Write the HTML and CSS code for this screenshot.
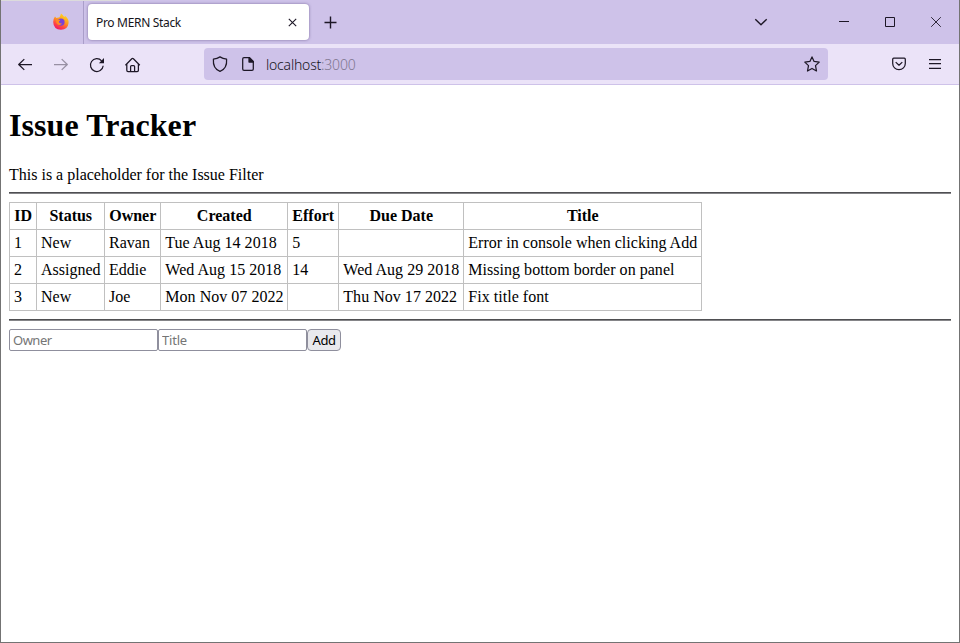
FILE: index.html
```html
<!DOCTYPE html>
<html lang="en">
<head>
<meta charset="utf-8">
<title>Pro MERN Stack</title>
<link rel="stylesheet" href="styles.css">
</head>
<body>
<div class="window">
  <header class="tabstrip">
    <div class="pinned">
      <svg width="18" height="18" viewBox="0 0 18 18">
        <defs>
          <linearGradient id="flame" x1="0.8" y1="0" x2="0.3" y2="1">
            <stop offset="0" stop-color="#ffe226"/>
            <stop offset="0.45" stop-color="#ff9a1f"/>
            <stop offset="0.75" stop-color="#ff4545"/>
            <stop offset="1" stop-color="#ee1469"/>
          </linearGradient>
        </defs>
        <path fill="url(#flame)" d="M3 3.4 L4.3 5 Q6 4.3 7.3 4.6 Q8.3 3.4 9 .6 Q11 1.8 12.1 4 L13.2 3 Q17 6 16.6 10 Q15.8 16.7 9 16.8 Q1.4 16.4 1.2 9 Q1.3 5.5 3 3.4Z"/>
        <circle cx="9" cy="9.1" r="3.6" fill="#7a42d8"/>
        <path fill="#ff8a25" d="M4 7 Q6.5 5.8 8.4 7.4 Q7 7.8 6.8 9 Q7.6 10.9 10 10.3 Q9 12.7 6 11.8 Q3.8 10.5 4 7Z"/>
      </svg>
    </div>
    <div class="tab">
      <span class="tab-title">Pro MERN Stack</span>
      <svg class="tab-close" width="9" height="9" viewBox="0 0 9 9"><path d="M.8 .8 8.2 8.2M8.2 .8 .8 8.2"/></svg>
    </div>
    <svg class="new-tab" width="13" height="13" viewBox="0 0 13 13"><path d="M6.5 .5V12.5M.5 6.5H12.5"/></svg>
    <div class="caption">
      <svg width="14" height="14" viewBox="0 0 14 14"><path stroke-width="1.4" d="M1.3 4.2 7 9.7 12.7 4.2"/></svg>
      <svg width="10" height="10" viewBox="0 0 10 10"><path stroke-width="1" d="M0 4.5H10"/></svg>
      <svg width="10" height="10" viewBox="0 0 10 10"><path stroke-width="1" d="M.5 .5H9.5V9.5H.5Z"/></svg>
      <svg width="10" height="10" viewBox="0 0 10 10"><path stroke-width=".9" d="M.2 .2 9.8 9.8M9.8 .2 .2 9.8"/></svg>
    </div>
  </header>
  <nav class="toolbar">
    <div class="nav-buttons">
      <svg width="16" height="16" viewBox="0 0 16 16"><path d="M15 7.5H2M7.3 2.1 1.7 7.5 7.3 12.9"/></svg>
      <svg class="disabled" width="16" height="16" viewBox="0 0 16 16"><path d="M1 7.5H14M8.7 2.1 14.3 7.5 8.7 12.9"/></svg>
      <svg width="16" height="16" viewBox="0 0 16 16"><path d="M14.2 8.8A6.4 6.4 0 1 1 12.6 3.8"/><path class="solid" d="M15 1.1V6.2H9.9Z"/></svg>
      <svg width="16" height="16" viewBox="0 0 16 16"><path d="M.4 8.2 6.8 1.8Q7.6 1.1 8.4 1.8L14.8 8.2M1.8 7V13.2Q1.8 14.5 3.1 14.5H12.1Q13.4 14.5 13.4 13.2V7M5.6 14.5V9.6Q5.6 8.6 6.6 8.6H8.6Q9.6 8.6 9.6 9.6V14.5"/></svg>
    </div>
    <div class="address">
      <svg width="16" height="16" viewBox="0 0 16 16"><path d="M8 .9Q10.8 2.7 14.6 3.2C15 8.4 12.9 13.5 8 15.3C3.1 13.5 1 8.4 1.4 3.2Q5.2 2.7 8 .9Z"/></svg>
      <svg class="page-icon" width="12" height="14" viewBox="0 0 12 14"><path d="M7.6 .7H2Q.7 .7 .7 2V12Q.7 13.3 2 13.3H10Q11.3 13.3 11.3 12V4.4Z"/><path class="fold" d="M7 .7V5H11.3Z"/></svg>
      <span class="url">localhost<span class="port">:3000</span></span>
      <svg class="star" width="16" height="16" viewBox="0 0 16 16"><path d="M8 .9 10.1 5.4 15.2 6.1 11.5 9.6 12.5 15 8 12.5 3.5 15 4.5 9.6 .8 6.1 5.9 5.4Z"/></svg>
    </div>
    <div class="tools">
      <svg width="14" height="14" viewBox="0 0 14 14"><path d="M1.7 1.2H12.3Q13.3 1.2 13.3 2.2V6.4A6.3 6.3 0 0 1 .7 6.4V2.2Q.7 1.2 1.7 1.2ZM3.7 5.1 7 8.2 10.3 5.1"/></svg>
      <svg width="12" height="12" viewBox="0 0 12 12"><path d="M0 1.5H12M0 5.7H12M0 10.3H12"/></svg>
    </div>
  </nav>
  <main class="page">
    <h1>Issue Tracker</h1>
    <div class="filter">This is a placeholder for the Issue Filter</div>
    <hr>
    <table class="issues">
      <colgroup><col class="c-id"><col class="c-status"><col class="c-owner"><col class="c-created"><col class="c-effort"><col class="c-due"><col class="c-title"></colgroup>
      <thead>
        <tr><th>ID</th><th>Status</th><th>Owner</th><th>Created</th><th>Effort</th><th>Due Date</th><th>Title</th></tr>
      </thead>
      <tbody>
        <tr><td>1</td><td>New</td><td>Ravan</td><td>Tue Aug 14 2018</td><td>5</td><td></td><td>Error in console when clicking Add</td></tr>
        <tr><td>2</td><td>Assigned</td><td>Eddie</td><td>Wed Aug 15 2018</td><td>14</td><td>Wed Aug 29 2018</td><td>Missing bottom border on panel</td></tr>
        <tr><td>3</td><td>New</td><td>Joe</td><td>Mon Nov 07 2022</td><td></td><td>Thu Nov 17 2022</td><td>Fix title font</td></tr>
      </tbody>
    </table>
    <hr>
    <form class="add-form">
      <input type="text" placeholder="Owner"><input type="text" placeholder="Title"><button type="button">Add</button>
    </form>
  </main>
</div>
</body>
</html>
```
FILE: styles.css
```css
* { box-sizing: border-box; }
body { margin: 0; background: #fff; }
svg { display: block; flex: none; fill: none; stroke: #1d1726; stroke-width: 1.25; stroke-linejoin: round; stroke-linecap: butt; }
svg .solid { fill: #1d1726; stroke: none; }
svg .fold { fill: #1d1726; }
.pinned svg { stroke: none; }
.window {
  height: 643px;
  border: 1px solid #737373;
  border-top: 0;
  background: #fff;
  overflow: hidden;
}
.tabstrip {
  display: flex;
  height: 44px;
  background: linear-gradient(#dcdbdc, #dcdbdc) 0 0 / 120px 1px no-repeat #cec2e9;
  font-family: "Noto Sans", sans-serif;
}
.pinned {
  width: 83px;
  margin-top: 1px;
  padding: 12px 0 0 51px;
  border-right: 1px solid #aa9ec9;
}
.tab {
  display: flex;
  align-items: center;
  justify-content: space-between;
  width: 221px;
  height: 36px;
  margin: 4px 0 0 4px;
  padding: 0 12px 0 8px;
  border-radius: 4px;
  background: #fff;
  box-shadow: 0 0 3px rgba(70, 50, 110, .6);
}
.tab-title { padding-top: 2px; font-size: 12px; line-height: 16px; letter-spacing: -.32px; color: #15141a; }
.tab-close { stroke-width: 1.1; }
.new-tab { margin: 16px 0 0 15px; stroke-width: 1.4; }
.caption { display: flex; align-items: center; height: 44px; margin-left: auto; padding-right: 18px; gap: 36px; }
.caption svg:first-child { margin-right: 35px; }
.toolbar {
  display: flex;
  height: 41px;
  padding: 4px 18px 0 16px;
  border-bottom: 1px solid #cec2e9;
  background: #ebe3f8;
}
.nav-buttons { display: flex; gap: 20px; width: 187px; padding-top: 9px; }
.disabled { opacity: .4; }
.address {
  display: flex;
  align-items: center;
  width: 624px;
  height: 32px;
  padding: 0 8px;
  border-radius: 4px;
  background: #cec2e9;
}
.page-icon { margin-left: 14px; }
.url { margin: 2px 0 0 12px; font: 14px/20px "Noto Sans", sans-serif; font-weight: 300; letter-spacing: -.2px; color: #15141a; }
.port { color: #7f768f; }
.star { margin-left: auto; }
.tools { display: flex; align-items: center; gap: 23px; height: 32px; margin-left: auto; }
.page { padding: 0 8px; color: #000; font: 16px/18px "Liberation Serif", serif; }
h1 { margin: 22px 0 22px; font-size: 32px; line-height: 37px; letter-spacing: .06px; }
.filter { height: 18px; }
hr { height: 2px; margin: 8px 0; border: 0; border-top: 1px solid #4f4f52; background: #858588; }
.issues { width: 693px; table-layout: fixed; border-collapse: collapse; }
.c-id { width: 27px; }
.c-status { width: 68px; }
.c-owner { width: 56px; }
.c-created { width: 127px; }
.c-effort { width: 51px; }
.c-due { width: 125px; }
.c-title { width: 238px; }
th, td { height: 27px; padding: 4px; border: 1px solid #c0c0c0; white-space: nowrap; }
th { padding-left: 4px; padding-right: 3.5px; }
td:nth-child(n+4) { padding-left: 4.3px; padding-right: 3px; letter-spacing: .03px; }
.add-form { display: flex; height: 22px; margin: 0; }
.add-form input {
  width: 149px;
  height: 22px;
  padding: 0 3px;
  border: 1px solid #8f8f9d;
  border-radius: 2px;
  font: 13px/18px "Noto Sans", sans-serif;
  letter-spacing: -.5px;
}
.add-form input + input { letter-spacing: -.2px; }
.add-form input::placeholder { color: #757575; opacity: 1; }
.add-form button {
  width: 34px;
  height: 22px;
  padding: 0;
  border: 1px solid #8f8f9d;
  border-radius: 4px;
  background: #e9e9ed;
  color: #000;
  font: 13px/18px "Noto Sans", sans-serif;
  letter-spacing: -.5px;
}
```
